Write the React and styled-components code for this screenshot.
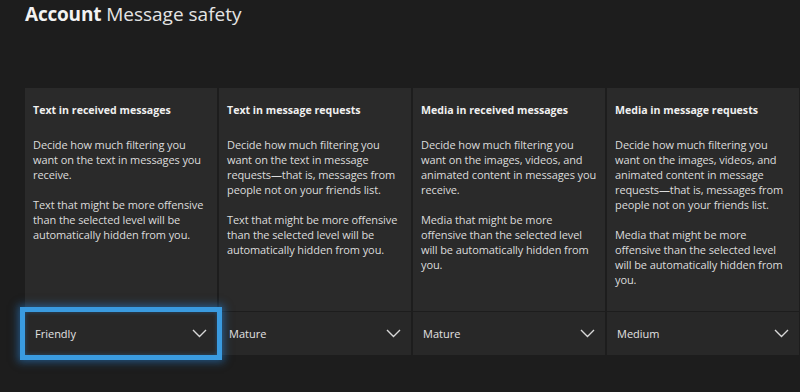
import React from "react";
import styled, { createGlobalStyle } from "styled-components";

const GlobalStyle = createGlobalStyle`
  html, body {
    margin: 0;
    padding: 0;
    background: #1d1d1d;
    font-family: "Open Sans", "Noto Sans", sans-serif;
    color: #e6e6e6;
  }
`;

const Page = styled.div`
  width: 800px;
  height: 392px;
  overflow: hidden;
  background: #1d1d1d;
  padding: 1px 0 0 25px;
  box-sizing: border-box;
`;

const Title = styled.h1`
  margin: 0;
  font-size: 19px;
  line-height: 26px;
  font-weight: 400;
  color: #e4e4e4;

  strong {
    font-weight: 700;
    color: #f2f2f2;
    letter-spacing: -0.2px;
  }
`;

const Grid = styled.div`
  display: grid;
  grid-template-columns: repeat(4, 192px);
  column-gap: 2px;
  margin-top: 61px;
`;

const Column = styled.div`
  display: flex;
  flex-direction: column;
  row-gap: 1px;
  position: relative;
  z-index: ${(p) => (p.$focused ? 2 : 1)};
`;

const Card = styled.div`
  background: #2a2a2a;
  height: 223px;
  padding: 14px 8px 0 8px;
  box-sizing: border-box;
`;

const Heading = styled.h2`
  margin: 0 0 19px;
  font-size: 10.6px;
  line-height: 16px;
  font-weight: 700;
  color: #f0f0f0;
`;

const Para = styled.p`
  margin: 0 0 15px;
  font-size: 11px;
  line-height: 15px;
  color: #dcdcdc;
  letter-spacing: -0.1px;
`;

const Select = styled.div`
  position: relative;
  height: 43px;
  background: #282828;
  display: flex;
  align-items: center;
  justify-content: space-between;
  padding: 0 10px 0 10px;
  box-sizing: border-box;
  font-size: 11px;
  color: #e2e2e2;

  ${(p) =>
    p.$focused &&
    `
    &::after {
      content: "";
      position: absolute;
      left: -5px;
      right: -5px;
      top: -5px;
      bottom: -5px;
      border: 5px solid #3a9be0;
      box-shadow: 0 0 8px 2px rgba(40, 140, 230, 0.5), inset 0 0 4px rgba(40, 140, 230, 0.4);
      pointer-events: none;
    }
  `}
`;

const Chevron = () => (
  <svg width="15" height="9" viewBox="0 0 15 9" fill="none">
    <path d="M1 1 L7.5 7.5 L14 1" stroke="#d8d8d8" strokeWidth="1.4" />
  </svg>
);

const columns = [
  {
    heading: "Text in received messages",
    paras: [
      "Decide how much filtering you want on the text in messages you receive.",
      "Text that might be more offensive than the selected level will be automatically hidden from you.",
    ],
    value: "Friendly",
    focused: true,
  },
  {
    heading: "Text in message requests",
    paras: [
      "Decide how much filtering you want on the text in message requests\u2014that is, messages from people not on your friends list.",
      "Text that might be more offensive than the selected level will be automatically hidden from you.",
    ],
    value: "Mature",
  },
  {
    heading: "Media in received messages",
    paras: [
      "Decide how much filtering you want on the images, videos, and animated content in messages you receive.",
      "Media that might be more offensive than the selected level will be automatically hidden from you.",
    ],
    value: "Mature",
  },
  {
    heading: "Media in message requests",
    paras: [
      "Decide how much filtering you want on the images, videos, and animated content in message requests\u2014that is, messages from people not on your friends list.",
      "Media that might be more offensive than the selected level will be automatically hidden from you.",
    ],
    value: "Medium",
  },
];

export default function App() {
  return (
    <>
      <GlobalStyle />
      <Page>
        <Title>
          <strong>Account</strong> Message safety
        </Title>
        <Grid>
          {columns.map((c) => (
            <Column key={c.heading} $focused={c.focused}>
              <Card>
                <Heading>{c.heading}</Heading>
                {c.paras.map((p) => (
                  <Para key={p}>{p}</Para>
                ))}
              </Card>
              <Select $focused={c.focused}>
                <span>{c.value}</span>
                <Chevron />
              </Select>
            </Column>
          ))}
        </Grid>
      </Page>
    </>
  );
}
